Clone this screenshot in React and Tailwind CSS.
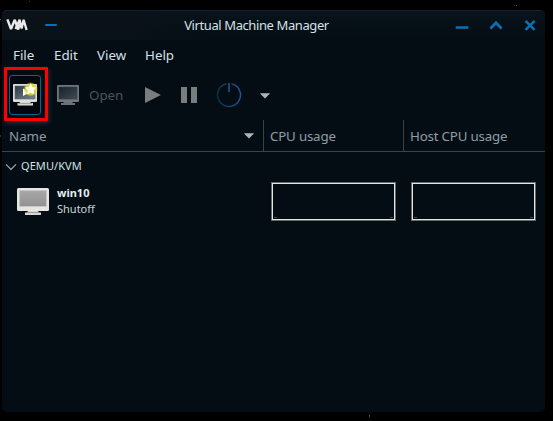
import React from "react";

function TitleBar() {
  return (
    <header className="relative flex h-[30px] shrink-0 items-center justify-center rounded-t-[5px] border-t border-[#0c2236] bg-linear-to-b from-[#08131b] to-[#050c13] text-[13px] tracking-[-0.4px] text-[#d3e0e6]">
      <div className="absolute inset-y-0 left-0 w-[240px] rounded-tl-[5px] bg-linear-to-r from-[#0a1218] via-[#0a1218]/90 to-transparent" />
      <svg className="absolute left-[3px] top-[7px]" width="24" height="14" viewBox="0 0 24 14" fill="none" stroke="#e8ebee">
        <path d="M2.400 1.300L6 11L9.800 1.800L13.200 11.500L14.600 6" strokeWidth="2.400" strokeLinejoin="bevel" />
        <path d="M10.500 11L14.600 1.800L16.600 10.500L18.600 1.800L21.600 12" strokeWidth="2.300" strokeLinejoin="bevel" />
      </svg>
      <div className="absolute left-[43px] top-[13px] h-[2px] w-[12px] rounded-sm bg-[#0873b4]" />
      <span className="relative -left-[17px] whitespace-nowrap">Virtual Machine Manager</span>
      <svg className="absolute left-[452px] top-[7px]" width="86" height="16" viewBox="0 0 86 16" fill="none" stroke="#0873b4" strokeWidth="2.5">
        <path d="M1.700 9.500H14.300" />
        <path d="M36.400 10.600L42 4.800L47.600 10.600" strokeWidth="2.700" />
        <path d="M71.600 2.900L80.600 11.900M80.600 2.900L71.600 11.900" />
      </svg>
    </header>
  );
}

function MenuBar() {
  return (
    <nav className="flex h-[30px] shrink-0 items-center pl-[11px] pt-[2px] text-[13.33px] text-[#d3e0e6]">
      <span className="w-[41px]">File</span>
      <span className="w-[43px]">Edit</span>
      <span className="w-[48px]">View</span>
      <span>Help</span>
    </nav>
  );
}

function NewMachineIcon() {
  return (
    <svg width="26" height="26" viewBox="0 0 26 26">
      <defs>
        <linearGradient id="screen" x1="0" y1="0" x2="1" y2="1">
          <stop offset="0" stopColor="#2c3846" />
          <stop offset="1" stopColor="#7b858f" />
        </linearGradient>
        <radialGradient id="glow">
          <stop offset="0" stopColor="#f7f24b" />
          <stop offset="0.7" stopColor="#dddb30" stopOpacity="0.9" />
          <stop offset="1" stopColor="#d6d52c" stopOpacity="0" />
        </radialGradient>
      </defs>
      <rect x="1" y="2" width="24" height="18" rx="1" fill="#dedfdc" />
      <rect x="3" y="4" width="20" height="13" fill="url(#screen)" stroke="#596470" strokeWidth=".6" />
      <path d="M8 20H18L19 21H21V23.500H5.500V21H7.500Z" fill="#d8d9d5" />
      <path d="M6 21.500H20" stroke="#8b8d8b" strokeWidth=".7" />
      <path d="M11 6.500V14L18 10.300Z" fill="#fff" />
      <circle cx="18.700" cy="7.300" r="7.300" fill="url(#glow)" />
      <path d="M18.700 1.200L20.400 5L24.600 5.400L21.500 8.300L22.400 12.600L18.700 10.400L15 12.600L15.900 8.300L12.800 5.400L17 5Z" fill="#fffff0" />
    </svg>
  );
}

function OpenIcon() {
  return (
    <svg width="24" height="22" viewBox="0 0 24 22">
      <defs>
        <linearGradient id="dimScreen" x1="0" y1="0" x2="1" y2="1">
          <stop offset="0" stopColor="#17212b" />
          <stop offset="1" stopColor="#414b54" />
        </linearGradient>
      </defs>
      <rect x="1" y="1" width="22" height="17" rx="1" fill="#71767a" />
      <rect x="3" y="3" width="18" height="12" fill="url(#dimScreen)" stroke="#333c45" strokeWidth=".6" />
      <path d="M8 18H16L17 19H19V21H5V19H7Z" fill="#6c7072" />
    </svg>
  );
}

function Caret() {
  return (
    <svg width="12" height="6" viewBox="0 0 12 6">
      <path d="M.8.3H11.200L6 5.500Z" fill="#a7b8c0" />
    </svg>
  );
}

function Toolbar() {
  return (
    <div className="relative flex h-[50px] shrink-0 items-center text-[13.33px]">
      <button className="ml-[7px] flex h-10 w-8 items-center justify-center rounded-[3px] border border-[#086593] bg-[#02080e]">
        <span className="-ml-px -mt-px flex shrink-0"><NewMachineIcon /></span>
      </button>
      <div className="absolute left-[2px] top-[-3px] h-[54px] w-[44px] rounded-[1px] border-[3px] border-[#fe0000] shadow-[1px_2px_4px_#26343d]" />
      <span className="ml-[15px]"><OpenIcon /></span>
      <span className="ml-[9px] mt-[2px] w-[56px] text-[#4b5459]">Open</span>
      <svg className="-mt-px" width="56" height="18" viewBox="0 0 56 18" fill="#7a7d7f">
        <path d="M0 1V17L16 9Z" />
        <path d="M36 1H42V17H36ZM46 1H52V17H46Z" />
      </svg>
      <svg className="ml-[15px]" width="26" height="26" viewBox="0 0 26 26" fill="none">
        <defs>
          <linearGradient id="ring" x1="0" y1="0" x2="1" y2="0">
            <stop offset="0" stopColor="#0c3145" />
            <stop offset="1" stopColor="#24569a" />
          </linearGradient>
        </defs>
        <path d="M10.600 1.700A11.500 11.500 0 1 0 15.400 1.700" stroke="url(#ring)" strokeWidth="1.400" />
        <path d="M13 1V10" stroke="#1b4575" strokeWidth="2" />
      </svg>
      <span className="ml-[17px] mt-px"><Caret /></span>
    </div>
  );
}

function ColumnHeader() {
  return (
    <div className="flex h-8 shrink-0 border-b border-[#3a444b] text-[13.33px] text-[#8d9ea6]">
      <div className="flex w-[262px] items-center justify-between border-r border-[#36424a] pl-[7px] pr-[8px]">
        <span className="pt-[2px]">Name</span>
        <span className="flex"><Caret /></span>
      </div>
      <div className="flex w-[140px] items-center border-r border-[#36424a] pl-[6px] pt-[2px] tracking-[-0.2px]">CPU usage</div>
      <div className="flex items-center whitespace-nowrap pl-[6px] pt-[2px] tracking-[-0.2px]">Host CPU usage</div>
    </div>
  );
}

function UsageGraph() {
  return (
    <div className="h-[39px] w-[125px] border border-[#65696b]">
      <div className="flex h-full items-end justify-between border border-[#e4e5e5] px-px">
        <span className="mb-px h-px w-[3px] bg-[#42494e]" />
        <span className="mb-px h-px w-[3px] bg-[#42494e]" />
      </div>
    </div>
  );
}

function MachineList() {
  return (
    <main className="grow text-[11px]">
      <div className="flex h-[28px] items-center pl-[3px] text-[#d3e0e6]">
        <svg className="mr-[4px] mt-[2px]" width="12" height="8" viewBox="0 0 12 8" fill="none">
          <path d="M1 1.300L6 6.300L11 1.300" stroke="#9eafb7" strokeWidth="1.200" />
        </svg>
        <span className="tracking-[0.08px]">QEMU/KVM</span>
      </div>
      <div className="flex h-[43px] items-center">
        <svg className="ml-[14px]" width="34" height="30" viewBox="0 0 34 30">
          <defs>
            <linearGradient id="greyScreen" x1="0" y1="0" x2="0" y2="1">
              <stop offset="0" stopColor="#a7a7a7" />
              <stop offset="1" stopColor="#929292" />
            </linearGradient>
          </defs>
          <rect x="1" y="1" width="32" height="23" rx="1.500" fill="#e6e6e5" />
          <rect x="3.500" y="3.500" width="27" height="16" fill="url(#greyScreen)" stroke="#c6c6c5" />
          <path d="M12 24H22L23 25.500H25V28H9V25.500H11Z" fill="#d7d7d5" />
          <path d="M11 25.500H23" stroke="#8a8a89" strokeWidth=".7" />
        </svg>
        <div className="w-[214px] pb-[2px] pl-[7px] leading-4 text-[#c8d6da]">
          <div className="font-bold text-[#e2f0f4]">win10</div>
          <div>Shutoff</div>
        </div>
        <div className="ml-[7px] flex gap-[15px]">
          <UsageGraph />
          <UsageGraph />
        </div>
      </div>
    </main>
  );
}

export default function App() {
  return (
    <div className="relative flex h-[421px] w-[553px] overflow-hidden bg-black pl-[2px] pt-[10px] font-['Noto_Sans',sans-serif]">
      <i className="absolute left-[29px] top-px size-px bg-[#12435d]" />
      <i className="absolute left-0 top-[19px] size-px bg-[#1b678c]" />
      <i className="absolute left-0 top-[135px] h-[2px] w-px bg-[#123d61]" />
      <i className="absolute left-[516px] top-[5px] size-px bg-[#236b90]" />
      <i className="absolute left-[369px] top-[415px] h-[2px] w-px bg-[#285a75]" />
      <div className="flex h-[402px] w-[543px] flex-col rounded-[5px] bg-[#050d14]">
        <TitleBar />
        <MenuBar />
        <Toolbar />
        <ColumnHeader />
        <MachineList />
      </div>
    </div>
  );
}
